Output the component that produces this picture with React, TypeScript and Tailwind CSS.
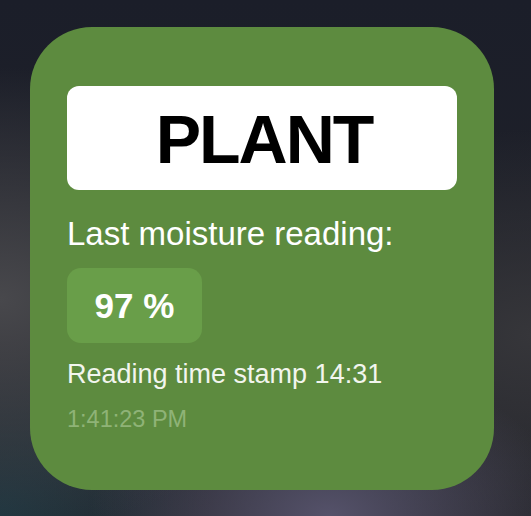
export default function App() {
  return (
    <div className="h-[516px] w-full overflow-hidden pt-[27px] pl-[30px] font-['Liberation_Sans',Arial,sans-serif] bg-[radial-gradient(ellipse_60%_45%_at_0%_58%,#48484c_0%,rgba(72,72,76,0)_100%),radial-gradient(ellipse_45%_30%_at_62%_100%,#55526a_0%,rgba(85,82,106,0)_100%),radial-gradient(ellipse_40%_35%_at_0%_100%,#1f3640_0%,rgba(31,54,64,0)_100%),radial-gradient(ellipse_50%_40%_at_100%_65%,#36363a_0%,rgba(54,54,58,0)_100%),linear-gradient(180deg,#1b1e29_0%,#1e2029_40%,#26262c_100%)]">
      <div className="flex h-[463px] w-[464px] flex-col rounded-[62px] bg-[#5d8b3f] px-[37px] pt-[59px]">
        <div className="flex h-[104px] items-center justify-center rounded-[12px] bg-white pt-[2px] pl-[4px]">
          <span className="text-[68px] font-bold leading-none tracking-[-2px] text-black">
            PLANT
          </span>
        </div>
        <p className="mt-[25px] text-[33px] font-light leading-[37px] text-white">
          Last moisture reading:
        </p>
        <div className="mt-[16px] flex h-[75px] w-[135px] items-center justify-center rounded-[14px] bg-[#699e49]">
          <span className="text-[35px] font-bold leading-none text-white">97 %</span>
        </div>
        <p className="mt-[15px] text-[27px] leading-[32px] text-[#f2f5ee]">
          Reading time stamp 14:31
        </p>
        <p className="mt-[15px] text-[23.5px] leading-[28px] text-[#8fb377]">1:41:23 PM</p>
      </div>
    </div>
  )
}
